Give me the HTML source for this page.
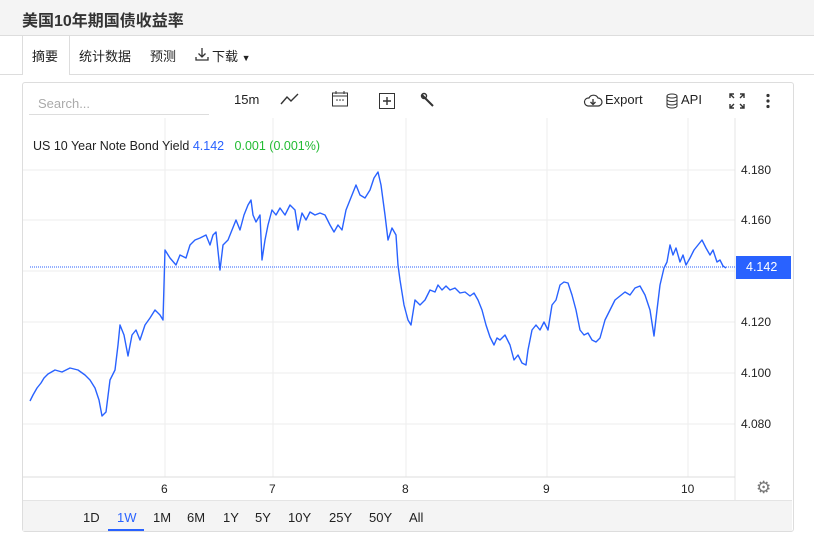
<!DOCTYPE html>
<html><head><style>
body{margin:0;width:814px;height:552px;background:#fff;font-family:"Liberation Sans","Noto Sans CJK SC",sans-serif;position:relative;overflow:hidden}
.top{position:absolute;left:0;top:0;width:814px;height:35px;background:#f4f4f4;border-bottom:1px solid #ddd}
.top h1{margin:0;position:absolute;left:22px;top:7px;font-size:16px;font-weight:bold;color:#333}
.tabs{position:absolute;top:36px;left:0;width:814px;height:38px;border-bottom:1px solid #ddd}
.tab{position:absolute;top:10px;font-size:13px;color:#222}
.box{position:absolute;left:22px;top:82px;width:770px;height:448px;border:1px solid #ddd;border-radius:3px}
.t{position:absolute;font-size:13px;color:#222}
.ax{position:absolute;font-size:12px;color:#222}
</style></head><body>
<div class="top"><h1>美国10年期国债收益率</h1></div>
<div class="tabs">
<div style="position:absolute;left:22px;top:0;width:46px;height:39px;background:#fff;border-left:1px solid #ddd;border-right:1px solid #ddd"></div>
<div class="tab" style="left:32px">摘要</div>
<div class="tab" style="left:79px">统计数据</div>
<div class="tab" style="left:150px">预测</div>
<svg style="position:absolute;left:195px;top:11px" width="15" height="15"><path d="M7 1V10M3.5 6.5L7 10L10.5 6.5M1 10V13H13V10" fill="none" stroke="#333" stroke-width="1.3"/></svg>
<div class="tab" style="left:212px">下载 <span style="font-size:9px">▼</span></div>
</div>
<div class="box"></div>
<div class="t" style="left:38px;top:96px;color:#aaa">Search...</div>
<div style="position:absolute;left:29px;top:114px;width:180px;border-bottom:1px solid #ddd"></div>
<div class="t" style="left:234px;top:92px">15m</div>
<svg style="position:absolute;left:280px;top:90px" width="20" height="18"><path d="M1 14 L7 7 L11 11 L18 4" fill="none" stroke="#333" stroke-width="1.4"/></svg>
<svg style="position:absolute;left:331px;top:90px" width="18" height="18"><rect x="1.5" y="3" width="15" height="13" fill="none" stroke="#333"/><line x1="1.5" y1="6" x2="16.5" y2="6" stroke="#333"/><line x1="5" y1="1" x2="5" y2="4" stroke="#333"/><line x1="13" y1="1" x2="13" y2="4" stroke="#333"/><circle cx="6" cy="10" r=".8" fill="#333"/><circle cx="9" cy="10" r=".8" fill="#333"/><circle cx="12" cy="10" r=".8" fill="#333"/></svg>
<svg style="position:absolute;left:378px;top:92px" width="18" height="18"><rect x="1.5" y="1.5" width="15" height="15" fill="none" stroke="#333"/><path d="M9 5V13M5 9H13" stroke="#333" stroke-width="1.4"/></svg>
<svg style="position:absolute;left:420px;top:92px" width="16" height="16"><path d="M2 3 L6 7 L13 14" stroke="#333" stroke-width="2" fill="none"/><circle cx="4" cy="4" r="2.5" fill="none" stroke="#333" stroke-width="1.4"/></svg>
<svg style="position:absolute;left:583px;top:93px" width="20" height="16"><path d="M5 13 H15 A4 4 0 0 0 15 5 A5 5 0 0 0 6 5 A4 4 0 0 0 5 13Z" fill="none" stroke="#333" stroke-width="1.2"/><path d="M10 6V11M7.5 9L10 11.5L12.5 9" stroke="#333" stroke-width="1.3" fill="none"/></svg>
<div class="t" style="left:605px;top:92px">Export</div>
<svg style="position:absolute;left:665px;top:93px" width="14" height="16"><ellipse cx="7" cy="3" rx="5" ry="2" fill="none" stroke="#333"/><path d="M2 3V13A5 2 0 0 0 12 13V3M2 6.5A5 2 0 0 0 12 6.5M2 10A5 2 0 0 0 12 10" fill="none" stroke="#333"/></svg>
<div class="t" style="left:681px;top:92px">API</div>
<svg style="position:absolute;left:728px;top:92px" width="18" height="18"><path d="M2 6V2H6M2 2L6 6M12 2H16V6M16 2L12 6M2 12V16H6M2 16L6 12M16 12V16H12M16 16L12 12" stroke="#333" stroke-width="1.4" fill="none"/></svg>
<svg style="position:absolute;left:765px;top:93px" width="6" height="16"><circle cx="3" cy="2.5" r="1.6" fill="#333"/><circle cx="3" cy="8" r="1.6" fill="#333"/><circle cx="3" cy="13.5" r="1.6" fill="#333"/></svg>
<svg style="position:absolute;left:0;top:0" width="814" height="552">
<g stroke="#eee" stroke-width="1">
<line x1="23" y1="170" x2="735" y2="170"/><line x1="23" y1="220" x2="735" y2="220"/><line x1="23" y1="271" x2="735" y2="271"/><line x1="23" y1="322" x2="735" y2="322"/><line x1="23" y1="373" x2="735" y2="373"/><line x1="23" y1="424" x2="735" y2="424"/>
<line x1="165" y1="118" x2="165" y2="477"/><line x1="273" y1="118" x2="273" y2="477"/><line x1="406" y1="118" x2="406" y2="477"/><line x1="547" y1="118" x2="547" y2="477"/><line x1="688" y1="118" x2="688" y2="477"/>
</g>
<line x1="735" y1="118" x2="735" y2="500" stroke="#e4e4e4"/>
<line x1="23" y1="477" x2="735" y2="477" stroke="#ddd"/>
<line x1="30" y1="267" x2="735" y2="267" stroke="#2962ff" stroke-dasharray="1 1"/>
<polyline fill="none" stroke="#2962ff" stroke-width="1.4" stroke-linejoin="round" points="30,401 33,395 37,388 41,383 44,378 48,374 55,370 62,372 70,368 78,370 85,375 90,380 95,388 99,400 102,416 106,412 110,380 115,370 118,345 120,325 124,335 128,356 132,335 136,330 140,340 145,325 150,318 155,310 160,315 163,320 165,250 170,258 176,265 180,255 186,258 190,245 195,240 200,238 206,235 210,245 213,235 216,232 220,270 223,245 228,240 232,230 236,220 240,230 244,215 248,205 251,200 253,215 256,222 260,215 262,260 265,240 268,225 272,210 276,215 280,208 285,215 290,205 295,210 298,230 302,213 306,220 310,212 315,215 320,213 325,215 330,225 334,232 338,225 342,230 346,210 350,200 354,190 356,185 360,195 365,198 370,190 374,178 378,172 381,185 385,215 388,240 392,228 396,235 398,265 400,280 404,305 408,320 411,325 415,300 420,305 425,300 430,290 435,292 438,285 442,290 446,286 450,290 455,288 460,293 465,292 470,296 474,293 478,300 482,310 486,325 490,337 494,345 497,338 500,340 505,335 510,345 514,360 518,355 522,363 526,365 528,350 532,330 536,325 540,330 544,322 548,330 552,305 556,300 560,285 564,282 568,283 572,295 576,310 580,330 584,335 588,333 592,340 596,342 600,338 605,320 610,310 615,300 620,296 625,292 630,295 635,288 640,286 645,295 650,310 654,336 657,310 660,285 664,268 667,262 670,245 673,255 676,248 680,262 683,255 686,265 690,258 694,250 698,245 702,240 706,248 710,255 713,250 717,262 720,260 723,266 726,268"/>
<rect x="736" y="256" width="55" height="23" fill="#2962ff"/>
</svg>
<div class="t" style="left:33px;top:139px;font-size:12.5px">US 10 Year Note Bond Yield <span style="color:#2962ff">4.142</span> &nbsp; <span style="color:#22bb33">0.001 (0.001%)</span></div>
<div class="ax" style="left:741px;top:163px">4.180</div>
<div class="ax" style="left:741px;top:213px">4.160</div>
<div class="ax" style="left:741px;top:315px">4.120</div>
<div class="ax" style="left:741px;top:366px">4.100</div>
<div class="ax" style="left:741px;top:417px">4.080</div>
<div class="ax" style="left:746px;top:260px;color:#fff;font-size:12.5px">4.142</div>
<div class="ax" style="left:161px;top:482px">6</div>
<div class="ax" style="left:269px;top:482px">7</div>
<div class="ax" style="left:402px;top:482px">8</div>
<div class="ax" style="left:543px;top:482px">9</div>
<div class="ax" style="left:681px;top:482px">10</div>
<div style="position:absolute;left:756px;top:478px;font-size:17px;color:#777">⚙</div>
<div style="position:absolute;left:23px;top:500px;width:769px;height:30px;background:#f4f4f4;border-top:1px solid #e4e4e4"></div>
<div class="t" style="left:83px;top:510px">1D</div>
<div class="t" style="left:117px;top:510px;color:#2962ff">1W</div>
<div style="position:absolute;left:108px;top:529px;width:36px;height:2px;background:#2962ff"></div>
<div class="t" style="left:153px;top:510px">1M</div>
<div class="t" style="left:187px;top:510px">6M</div>
<div class="t" style="left:223px;top:510px">1Y</div>
<div class="t" style="left:255px;top:510px">5Y</div>
<div class="t" style="left:288px;top:510px">10Y</div>
<div class="t" style="left:329px;top:510px">25Y</div>
<div class="t" style="left:369px;top:510px">50Y</div>
<div class="t" style="left:409px;top:510px">All</div>
</body></html>
